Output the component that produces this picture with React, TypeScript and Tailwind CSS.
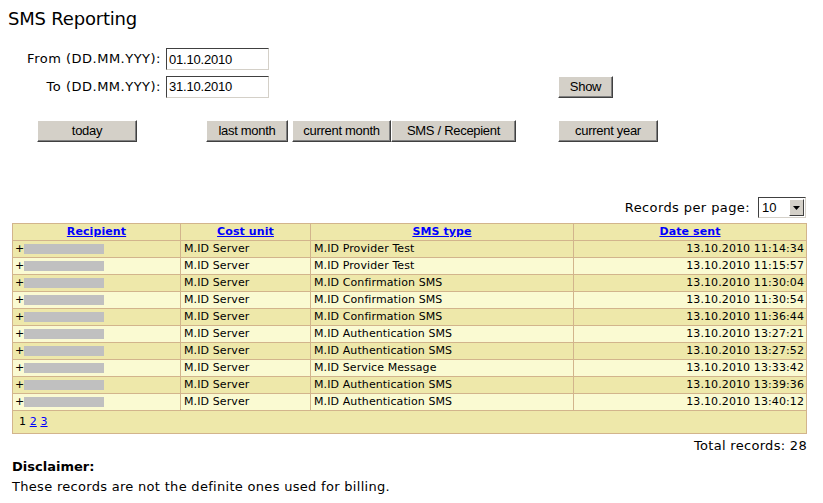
import React from "react";

const rows = [
  ["M.ID Server", "M.ID Provider Test", "13.10.2010 11:14:34"],
  ["M.ID Server", "M.ID Provider Test", "13.10.2010 11:15:57"],
  ["M.ID Server", "M.ID Confirmation SMS", "13.10.2010 11:30:04"],
  ["M.ID Server", "M.ID Confirmation SMS", "13.10.2010 11:30:54"],
  ["M.ID Server", "M.ID Confirmation SMS", "13.10.2010 11:36:44"],
  ["M.ID Server", "M.ID Authentication SMS", "13.10.2010 13:27:21"],
  ["M.ID Server", "M.ID Authentication SMS", "13.10.2010 13:27:52"],
  ["M.ID Server", "M.ID Service Message", "13.10.2010 13:33:42"],
  ["M.ID Server", "M.ID Authentication SMS", "13.10.2010 13:39:36"],
  ["M.ID Server", "M.ID Authentication SMS", "13.10.2010 13:40:12"],
];

const Btn = ({ label, w }: { label: string; w: string }) => (
  <button
    className={`${w} h-[22px] block bg-[#d4d0c8] border border-t-white border-l-white border-b-[#404040] border-r-[#404040] text-[13px] leading-[18px] text-black tracking-[-0.3px] font-['Liberation_Sans',sans-serif] shadow-[inset_-1px_-1px_0_#808080]`}
  >
    {label}
  </button>
);

const DateInput = ({ value }: { value: string }) => (
  <input
    readOnly
    value={value}
    className="w-[103px] h-[22px] px-[2px] bg-white border border-t-[#404040] border-l-[#404040] border-b-[#d4d0c8] border-r-[#d4d0c8] text-[13px] text-black font-['Liberation_Sans',sans-serif] tracking-[-0.2px] outline-none"
  />
);

export default function App() {
  return (
    <div className="w-[823px] h-[503px] bg-white text-black font-['DejaVu_Sans',sans-serif] overflow-hidden">
      <h1 className="pl-[8px] pt-[9px] text-[18px] leading-[20px] tracking-[-0.2px]">
        SMS Reporting
      </h1>

      <div className="mt-[19px] grid grid-cols-[161px_103px] gap-x-[5px] gap-y-[5px] items-center text-[13px]">
        <span className="text-right tracking-[0.5px]">From (DD.MM.YYY):</span>
        <DateInput value="01.10.2010" />
        <span className="text-right tracking-[0.5px]">To (DD.MM.YYY):</span>
        <div className="flex items-center">
          <DateInput value="31.10.2010" />
          <div className="ml-[289px] mt-[1px] flex">
            <Btn label="Show" w="w-[55px]" />
          </div>
        </div>
      </div>

      <div className="mt-[22px] flex items-start pl-[37px]">
        <Btn label="today" w="w-[100px]" />
        <div className="ml-[69px] flex">
          <Btn label="last month" w="w-[82px]" />
          <div className="ml-[4px] flex">
            <Btn label="current month" w="w-[99px]" />
            <Btn label="SMS / Recepient" w="w-[125px]" />
          </div>
        </div>
        <div className="ml-[42px] flex">
          <Btn label="current year" w="w-[100px]" />
        </div>
      </div>

      <div className="mt-[55px] flex justify-end items-center pr-[17px] text-[13px]">
        <span className="mr-[8px] tracking-[0.4px]">Records per page:</span>
        <div className="w-[48px] h-[21px] flex items-center border border-t-[#404040] border-l-[#404040] border-b-[#d4d0c8] border-r-[#d4d0c8] bg-white">
          <span className="flex-1 pl-[3px] text-[13px] font-['Liberation_Sans',sans-serif]">10</span>
          <span className="w-[15px] h-[17px] mr-[1px] bg-[#d4d0c8] border border-t-white border-l-white border-b-[#404040] border-r-[#404040] flex items-center justify-center">
            <svg width="7" height="4" viewBox="0 0 7 4">
              <path d="M0 0h7L3.5 4z" fill="#000" />
            </svg>
          </span>
        </div>
      </div>

      <div className="mt-[5px] ml-[12px] w-[795px]">
        <table className="w-full border-collapse border border-[#d2b48c] text-[11px] leading-[16px] tracking-[0.1px]">
          <thead>
            <tr className="bg-[#eee8aa]">
              {["Recipient", "Cost unit", "SMS type", "Date sent"].map((h, i) => (
                <th
                  key={h}
                  className={`border border-[#d2b48c] h-[17px] p-0 font-bold ${
                    ["w-[168px]", "w-[130px]", "w-[263px]", ""][i]
                  }`}
                >
                  <a className="text-[#0000ff] underline cursor-pointer">{h}</a>
                </th>
              ))}
            </tr>
          </thead>
          <tbody>
            {rows.map((r, i) => (
              <tr key={i} className={i % 2 === 0 ? "bg-[#eee8aa]" : "bg-[#fafad2]"}>
                <td className="border border-[#d2b48c] h-[17px] p-0 pl-[2px]">
                  <div className="flex items-center">
                    <span>+</span>
                    <span className="w-[80px] h-[10px] bg-[#c0c0c0]" />
                  </div>
                </td>
                <td className="border border-[#d2b48c] h-[17px] p-0 pl-[3px]">{r[0]}</td>
                <td className="border border-[#d2b48c] h-[17px] p-0 pl-[3px]">{r[1]}</td>
                <td className="border border-[#d2b48c] h-[17px] p-0 pr-[2px] text-right">{r[2]}</td>
              </tr>
            ))}
            <tr className="bg-[#eee8aa]">
              <td colSpan={4} className="h-[23px] p-0 pl-[6px]">
                <span>1 </span>
                <a className="text-[#0000ff] underline cursor-pointer">2</a>{" "}
                <a className="text-[#0000ff] underline cursor-pointer">3</a>
              </td>
            </tr>
          </tbody>
        </table>
      </div>

      <div className="mt-[2px] pr-[16px] text-right text-[13px] tracking-[0.3px]">Total records: 28</div>

      <div className="pl-[12px] mt-[1px] text-[13px] leading-[20px]">
        <div className="font-bold">Disclaimer:</div>
        <div className="tracking-[0.3px]">These records are not the definite ones used for billing.</div>
      </div>
    </div>
  );
}
